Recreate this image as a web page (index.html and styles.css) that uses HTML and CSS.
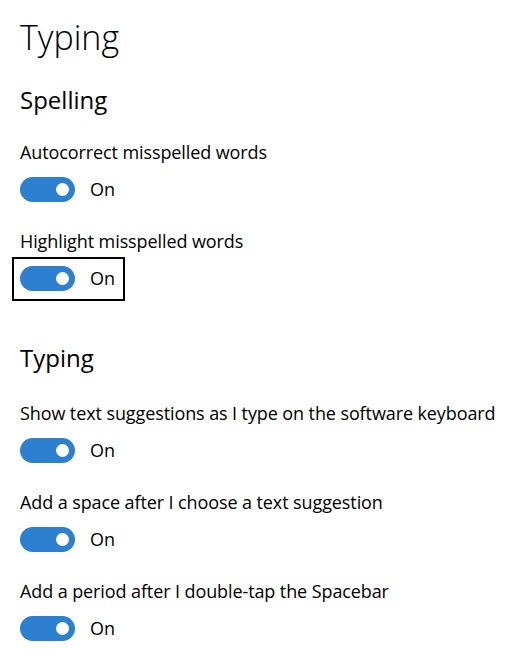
FILE: index.html
```html
<!DOCTYPE html>
<html lang="en">
<head>
<meta charset="utf-8">
<title>Typing</title>
<link rel="stylesheet" href="styles.css">
</head>
<body>
<main class="page">
  <h1 class="title">Typing</h1>

  <section class="group">
    <h2 class="group-title">Spelling</h2>
    <div class="setting">
      <div class="label">Autocorrect misspelled words</div>
      <div class="toggle-row"><span class="toggle"><span class="knob"></span></span><span class="state">On</span></div>
    </div>
    <div class="setting">
      <div class="label">Highlight misspelled words</div>
      <div class="toggle-row focused"><span class="toggle"><span class="knob"></span></span><span class="state">On</span></div>
    </div>
  </section>

  <section class="group group-second">
    <h2 class="group-title">Typing</h2>
    <div class="setting">
      <div class="label">Show text suggestions as I type on the software keyboard</div>
      <div class="toggle-row"><span class="toggle"><span class="knob"></span></span><span class="state">On</span></div>
    </div>
    <div class="setting">
      <div class="label">Add a space after I choose a text suggestion</div>
      <div class="toggle-row"><span class="toggle"><span class="knob"></span></span><span class="state">On</span></div>
    </div>
    <div class="setting">
      <div class="label">Add a period after I double-tap the Spacebar</div>
      <div class="toggle-row"><span class="toggle"><span class="knob"></span></span><span class="state">On</span></div>
    </div>
  </section>
</main>
</body>
</html>
```

FILE: styles.css
```css
html, body {
  margin: 0;
  padding: 0;
  background: #ffffff;
}

body {
  font-family: "Open Sans", "Noto Sans", "Liberation Sans", sans-serif;
  color: #000000;
}

.page {
  padding: 15px 0 0 20px;
}

.title {
  margin: 0;
  font-size: 34px;
  font-weight: 300;
  line-height: 44px;
}

.group-title {
  margin: 24px 0 0 0;
  font-size: 24px;
  font-weight: 400;
  line-height: 34px;
}

.group-second .group-title {
  margin-top: 50px;
}

.setting {
  margin-top: 26px;
}

.group-title + .setting {
  margin-top: 22px;
}

.group-second .group-title + .setting {
  margin-top: 25px;
}

.label {
  font-size: 18px;
  line-height: 26px;
  letter-spacing: -0.1px;
}

.toggle-row {
  position: relative;
  display: flex;
  align-items: center;
  width: max-content;
  height: 25px;
  margin-top: 12px;
}

.toggle {
  position: relative;
  display: block;
  width: 55px;
  height: 25px;
  border-radius: 13px;
  background: #2d7fd0;
}

.knob {
  position: absolute;
  right: 6px;
  top: 6px;
  width: 13px;
  height: 13px;
  border-radius: 50%;
  background: #ffffff;
}

.state {
  margin-left: 15px;
  font-size: 18px;
  line-height: 25px;
}

.focused::after {
  content: "";
  position: absolute;
  left: -8px;
  top: -9px;
  width: 113px;
  height: 44px;
  box-sizing: border-box;
  border: 2px solid #000000;
}
```
